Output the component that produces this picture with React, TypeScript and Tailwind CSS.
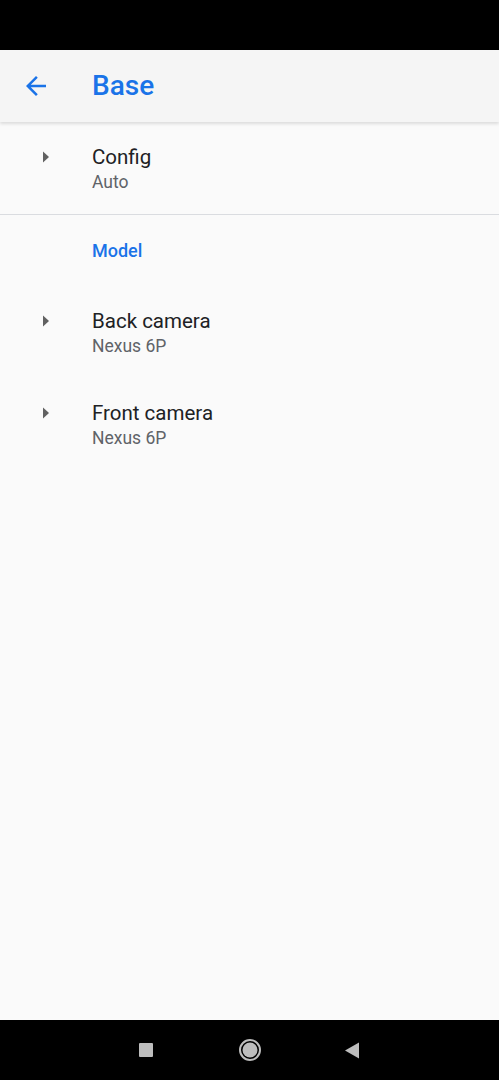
import React from 'react';

const Caret: React.FC = () => (
  <svg width="8" height="12" viewBox="0 0 8 12" className="block">
    <path d="M1 0.5 L7 6 L1 11.5 Z" fill="#616161" />
  </svg>
);

interface PrefItemProps {
  title: string;
  summary: string;
}

const PrefItem: React.FC<PrefItemProps> = ({ title, summary }) => (
  <div className="flex h-[92px] pt-[23px]">
    <div className="w-[92px] shrink-0 flex items-start pl-[42px] pt-[6px]">
      <Caret />
    </div>
    <div className="flex flex-col">
      <span className="text-[20.5px] leading-[24px] text-[#202124]">{title}</span>
      <span className="text-[17.5px] leading-[24px] mt-[1px] text-[#5f6368]">{summary}</span>
    </div>
  </div>
);

export default function App() {
  return (
    <div
      className="flex flex-col h-[1080px] w-full bg-[#fafafa] overflow-hidden"
      style={{ fontFamily: 'Roboto, "Liberation Sans", sans-serif' }}
    >
      {/* status bar */}
      <div className="h-[50px] shrink-0 bg-black" />

      {/* toolbar */}
      <div className="h-[72px] shrink-0 flex items-center bg-[#f5f5f5] shadow-[0_2px_3px_rgba(0,0,0,0.12)] relative z-10">
        <div className="w-[92px] shrink-0 flex items-center pl-[21px]">
          <svg width="30" height="30" viewBox="0 0 24 24">
            <path
              d="M20 11H7.83l5.59-5.59L12 4l-8 8 8 8 1.41-1.41L7.83 13H20v-2z"
              fill="#1a73e8"
            />
          </svg>
        </div>
        <span className="text-[28px] font-medium text-[#1a73e8] leading-none">Base</span>
      </div>

      {/* preferences */}
      <div className="flex-1 flex flex-col">
        <PrefItem title="Config" summary="Auto" />
        <div className="h-px bg-[#dadce0]" />
        <div className="pl-[92px] pt-[24px] pb-[23px]">
          <span className="block text-[18px] leading-[24px] font-medium text-[#1a73e8]">Model</span>
        </div>
        <PrefItem title="Back camera" summary="Nexus 6P" />
        <PrefItem title="Front camera" summary="Nexus 6P" />
      </div>

      {/* nav bar */}
      <div className="h-[60px] shrink-0 bg-black flex items-center justify-center">
        <div className="w-[14px] h-[14px] bg-[#bdbdbd] rounded-[1px] mr-[85px]" />
        <svg width="24" height="24" viewBox="0 0 24 24">
          <circle cx="12" cy="12" r="10" fill="none" stroke="#bdbdbd" strokeWidth="2" />
          <circle cx="12" cy="12" r="7.5" fill="#bdbdbd" />
        </svg>
        <svg width="16" height="17" viewBox="0 0 16 17" className="ml-[82px]">
          <path d="M15 0.5 L15 16.5 L1 8.5 Z" fill="#bdbdbd" />
        </svg>
      </div>
    </div>
  );
}
